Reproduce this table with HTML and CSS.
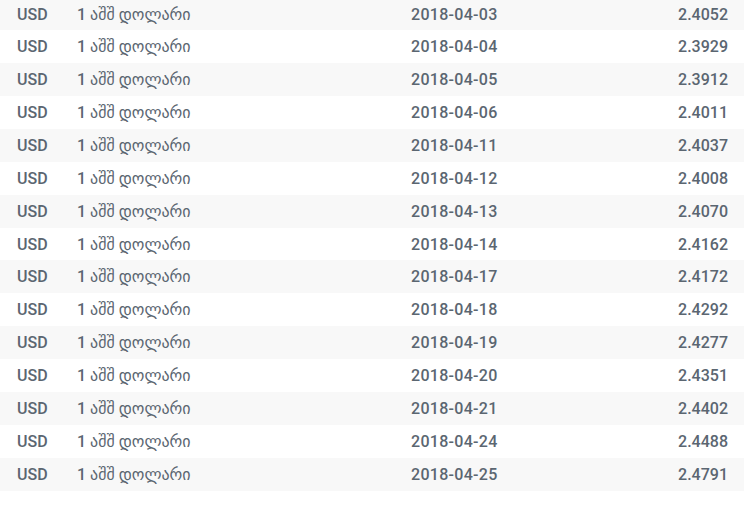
FILE: index.html
```html
<!DOCTYPE html>
<html lang="ka">
<head>
<meta charset="utf-8">
<link rel="stylesheet" href="styles.css">
</head>
<body>
<div class="rates">
<div class="row"><span class="code">USD</span><span class="name">1 აშშ დოლარი</span><span class="date">2018-04-03</span><span class="rate">2.4052</span></div>
<div class="row"><span class="code">USD</span><span class="name">1 აშშ დოლარი</span><span class="date">2018-04-04</span><span class="rate">2.3929</span></div>
<div class="row"><span class="code">USD</span><span class="name">1 აშშ დოლარი</span><span class="date">2018-04-05</span><span class="rate">2.3912</span></div>
<div class="row"><span class="code">USD</span><span class="name">1 აშშ დოლარი</span><span class="date">2018-04-06</span><span class="rate">2.4011</span></div>
<div class="row"><span class="code">USD</span><span class="name">1 აშშ დოლარი</span><span class="date">2018-04-11</span><span class="rate">2.4037</span></div>
<div class="row"><span class="code">USD</span><span class="name">1 აშშ დოლარი</span><span class="date">2018-04-12</span><span class="rate">2.4008</span></div>
<div class="row"><span class="code">USD</span><span class="name">1 აშშ დოლარი</span><span class="date">2018-04-13</span><span class="rate">2.4070</span></div>
<div class="row"><span class="code">USD</span><span class="name">1 აშშ დოლარი</span><span class="date">2018-04-14</span><span class="rate">2.4162</span></div>
<div class="row"><span class="code">USD</span><span class="name">1 აშშ დოლარი</span><span class="date">2018-04-17</span><span class="rate">2.4172</span></div>
<div class="row"><span class="code">USD</span><span class="name">1 აშშ დოლარი</span><span class="date">2018-04-18</span><span class="rate">2.4292</span></div>
<div class="row"><span class="code">USD</span><span class="name">1 აშშ დოლარი</span><span class="date">2018-04-19</span><span class="rate">2.4277</span></div>
<div class="row"><span class="code">USD</span><span class="name">1 აშშ დოლარი</span><span class="date">2018-04-20</span><span class="rate">2.4351</span></div>
<div class="row"><span class="code">USD</span><span class="name">1 აშშ დოლარი</span><span class="date">2018-04-21</span><span class="rate">2.4402</span></div>
<div class="row"><span class="code">USD</span><span class="name">1 აშშ დოლარი</span><span class="date">2018-04-24</span><span class="rate">2.4488</span></div>
<div class="row"><span class="code">USD</span><span class="name">1 აშშ დოლარი</span><span class="date">2018-04-25</span><span class="rate">2.4791</span></div>
</div>
</body>
</html>
```
FILE: styles.css
```css
html, body {
  margin: 0;
  padding: 0;
  background: #ffffff;
}
body {
  font-family: Roboto, "DejaVu Sans", sans-serif;
  font-weight: 500;
  font-size: 16px;
  color: #5b6671;
}
.rates {
  width: 744px;
  margin-top: -2.4px;
}
.row {
  display: flex;
  align-items: center;
  height: 32.86px;
  padding: 0 16px 0 17px;
  box-sizing: border-box;
  white-space: nowrap;
}
.row:nth-child(odd) {
  background: #f8f8f8;
}
.code {
  width: 60px;
  flex: none;
}
.name {
  width: 334px;
  flex: none;
}
.date {
  flex: none;
  letter-spacing: 0.3px;
}
.rate {
  margin-left: auto;
}
```
